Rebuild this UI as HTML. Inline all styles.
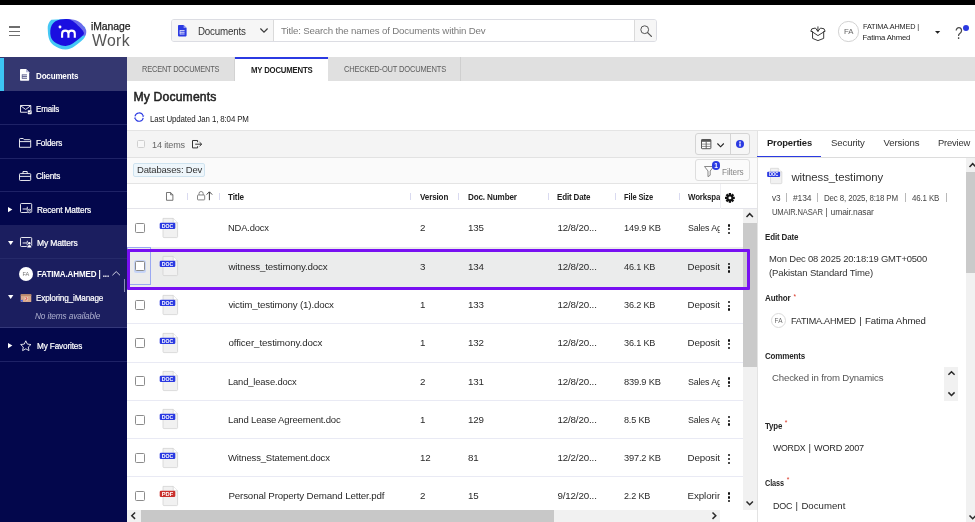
<!DOCTYPE html>
<html lang="en">
<head>
<meta charset="utf-8">
<title>iManage Work - My Documents</title>
<style>
html,body{margin:0;padding:0;}
body{width:975px;height:522px;overflow:hidden;position:relative;background:#fff;font-family:"Liberation Sans", sans-serif;color:#333;}
#app{position:absolute;left:0;top:0;width:975px;height:522px;will-change:transform;}
.a{position:absolute;box-sizing:border-box;}
.t{position:absolute;white-space:pre;line-height:14px;height:14px;color:#333;}
svg{position:absolute;overflow:visible;}
</style>
</head>
<body>
<div id="app">
<div id="topbar" class="a" style="left:0;top:0;width:975px;height:5px;background:#000"></div>
<header id="header" class="a" style="left:0;top:5px;width:975px;height:52px;background:#fff">
</header>
<div class="a" style="left:9px;top:26.45px;width:11.2px;height:1.1px;background:#6e6e6e;"></div>
<div class="a" style="left:9px;top:30.849999999999998px;width:11.2px;height:1.1px;background:#6e6e6e;"></div>
<div class="a" style="left:9px;top:35.050000000000004px;width:11.2px;height:1.1px;background:#6e6e6e;"></div>
<svg class="a" style="left:46px;top:17px;" width="42" height="34" viewBox="0 0 42 34">
<path d="M5.3 2.7 C2.5 5 1.5 8.5 1.7 11.5 C1.9 15 2 18 2.7 20.7 C3.6 24 5 26.3 7.3 27.9 C11 30.6 15 32.4 19.6 32.5 C23 32.5 26 31 28.9 28.9 C33 26 37 23 39.1 19.7 L39.1 10 L20 2 Z" fill="#45c8f5"/>
<path d="M20.7 2 C24 1.8 27 2.4 29.9 3.3 C33 4.4 35.4 6.2 37.1 8.4 C38.8 10.4 40 12 40.2 13.5 C40.4 15.4 40.2 17.2 39.4 18.8 L30 19 L15 15 Z" fill="#6a6cec"/>
<path d="M20.7 2 C16.5 1.9 12.5 2.6 9.4 4.3 C6.4 6.2 4.6 9.6 4.3 13.5 C4.1 15.6 4.3 17.8 4.8 19.7 C5.6 22.6 7.6 24.8 10.4 26.3 C13.2 27.9 16.4 28.9 19.6 28.9 C22.6 28.9 25.4 27.5 27.8 25.8 C31.4 23.4 35 20.6 37.6 17.6 C38.1 16.8 38 15.8 37.6 15 C36.4 12.6 34.2 10.4 31.9 8.4 C29.8 6.4 27.6 4.4 24.8 3.1 C23.5 2.5 22 2.05 20.7 2 Z" fill="#1a0fe0"/>
<circle cx="14" cy="10" r="1.45" fill="#fff"/>
<path d="M16.1 20.7 V16.8 C16.1 12.6 22.45 12.6 22.45 16.8 V20.7 M22.45 16.8 C22.45 12.6 28.8 12.6 28.8 16.8 V20.7" fill="none" stroke="#fff" stroke-width="2.1"/>
</svg>
<span class="t" style="left:91px;top:19.60px;font-size:10.4px;color:#222;letter-spacing:-0.066px;-webkit-text-stroke:0.25px #222;">iManage</span>
<span class="t" style="left:92px;top:33.90px;font-size:15.8px;color:#555;letter-spacing:0.355px;">Work</span>
<div id="search" class="a" style="left:171px;top:19.2px;width:486px;height:22.5px;border:1px solid #dcdde3;border-radius:3px;background:#fff;overflow:hidden"><div class="a" style="left:0;top:0;width:101.5px;height:21px;background:#f6f6f6;border-right:1px solid #dadada"></div><div class="a" style="left:461.6px;top:0;width:24px;height:21px;background:#f6f6f6;border-left:1px solid #dadada"></div></div>
<svg class="a" style="left:178px;top:25.4px;" width="8.6" height="11.4" viewBox="0 0 8.6 11.4">
<path d="M0.8 0 H5.6 L8.6 3 V10.6 Q8.6 11.4 7.8 11.4 H0.8 Q0 11.4 0 10.6 V0.8 Q0 0 0.8 0 Z" fill="#2b3ae2"/>
<path d="M5.6 0 V3 H8.6 Z" fill="#8c96f0"/>
<path d="M2 5.6 H6.6 M2 7.3 H6.6 M2 9 H6.6" stroke="#fff" stroke-width="0.8"/>
<path d="M2 5.2 V9.4" stroke="#fff" stroke-width="0.6"/>
</svg>
<span class="t" style="left:197.6px;top:24.70px;font-size:10px;letter-spacing:-0.197px;transform:scaleX(0.9753);transform-origin:0 50%;">Documents</span>
<svg class="a" style="left:260.4px;top:28.4px;" width="8" height="5" viewBox="0 0 8 5"><path d="M0.4 0.5 L4 4.2 L7.6 0.5" fill="none" stroke="#3a3a3a" stroke-width="1.15"/></svg>
<span class="t" style="left:281.2px;top:24.10px;font-size:9.8px;color:#7a7a7a;letter-spacing:-0.160px;transform:scaleX(0.9894);transform-origin:0 50%;">Title: Search the names of Documents within Dev</span>
<svg class="a" style="left:640px;top:24.5px;" width="12" height="12" viewBox="0 0 12 12"><circle cx="4.7" cy="4.7" r="3.9" fill="none" stroke="#555" stroke-width="1"/><path d="M7.6 7.6 L11.4 11.4" stroke="#555" stroke-width="1.3" stroke-linecap="round"/></svg>
<svg class="a" style="left:810px;top:26px;" width="16" height="15.5" viewBox="0 0 16 15.5">
<g fill="none" stroke="#3a3a3a" stroke-width="1" stroke-linejoin="round" stroke-linecap="round">
<path d="M2.56 6 V12.4 L7.95 14.6 L13.7 12.4 V6"/>
<path d="M2.56 6 L7.95 9.6 L13.7 6"/>
<path d="M2.56 5.8 L0.8 5.3 L1.85 2.8 L5.4 2.05 L7.95 5.3 L10.5 2.05 L14.05 2.8 L15.1 5.3 L13.7 5.8"/>
<path d="M7.95 0.8 V5 M6.9 3.9 L7.95 5.2 L9 3.9"/>
</g></svg>
<div class="a" style="left:838.4px;top:21.4px;width:20.2px;height:20.2px;border:1px solid #d2d2d2;border-radius:50%;background:#fff"></div>
<span class="t" style="left:844px;top:24.80px;font-size:7.9px;color:#666;letter-spacing:-0.169px;transform:scaleX(0.9873);transform-origin:0 50%;">FA</span>
<span class="t" style="left:862.6px;top:20.00px;font-size:7.7px;color:#222;letter-spacing:-0.153px;transform:scaleX(0.9477);transform-origin:0 50%;">FATIMA.AHMED |</span>
<span class="t" style="left:862.6px;top:30.50px;font-size:7.7px;color:#222;letter-spacing:-0.165px;">Fatima Ahmed</span>
<svg class="a" style="left:935.4px;top:31px;" width="5.2" height="2.8" viewBox="0 0 5.2 2.8"><path d="M0 0 H5.2 L2.6 2.8 Z" fill="#222"/></svg>
<span class="t" style="left:955px;top:26.20px;font-size:16.5px;color:#4c4c4c;letter-spacing:-0.322px;transform:scaleX(0.8347);transform-origin:0 50%;">?</span>
<div class="a" style="left:963.4px;top:24.6px;width:6px;height:6px;border-radius:50%;background:#2b3ae2"></div>
<nav id="sidebar" class="a" style="left:0;top:57px;width:126.6px;height:465px;background:#03074c">
</nav>
<div class="a" style="left:0px;top:57px;width:126.6px;height:34px;background:#343770;"></div>
<div class="a" style="left:0px;top:58px;width:3.7px;height:32.7px;background:#3cc4f4;"></div>
<div class="a" style="left:0px;top:225px;width:126.6px;height:102.6px;background:#1b1e5f;"></div>
<div class="a" style="left:0px;top:124.2px;width:126.6px;height:0.8px;background:#1e2266;"></div>
<div class="a" style="left:0px;top:158px;width:126.6px;height:0.8px;background:#1e2266;"></div>
<div class="a" style="left:0px;top:191.2px;width:126.6px;height:0.8px;background:#1e2266;"></div>
<div class="a" style="left:0px;top:258.2px;width:126.6px;height:0.8px;background:#262a6a;"></div>
<div class="a" style="left:0px;top:327.4px;width:126.6px;height:0.8px;background:#34387a;"></div>
<div class="a" style="left:0px;top:361.2px;width:126.6px;height:0.8px;background:#1e2266;"></div>
<div class="a" style="left:124.2px;top:279.4px;width:1.1px;height:12.8px;background:#8c8eb8;"></div>
<svg class="a" style="left:19.7px;top:69.2px;" width="9.2" height="11.8" viewBox="0 0 9.2 11.6">
<path d="M0.8 0 H6 L9.2 3.2 V10.8 Q9.2 11.6 8.4 11.6 H0.8 Q0 11.6 0 10.8 V0.8 Q0 0 0.8 0 Z" fill="#fff"/>
<path d="M6 0 V3.2 H9.2 Z" fill="#b9badb"/>
<path d="M2.2 5.8 H7 M2.2 7.5 H7 M2.2 9.2 H7" stroke="#33366f" stroke-width="0.8"/>
<path d="M2.2 5.4 V9.6" stroke="#33366f" stroke-width="0.6"/>
</svg>
<span class="t" style="left:35.6px;top:68.50px;font-size:8.7px;font-weight:700;color:#fff;letter-spacing:-0.184px;transform:scaleX(0.9243);transform-origin:0 50%;">Documents</span>
<svg class="a" style="left:19.6px;top:104.6px;" width="12" height="9.4" viewBox="0 0 12.2 9.6">
<g fill="none" stroke="#fff" stroke-width="0.9" stroke-linejoin="round">
<path d="M7.4 7.4 H0.5 V0.5 H11 V5"/>
<path d="M0.6 0.7 L5.75 4.6 L10.9 0.7"/>
</g>
<rect x="7.9" y="5.4" width="4" height="4" rx="0.6" fill="#fff"/>
<path d="M8.8 7.5 L9.6 8.3 L11 6.5" fill="none" stroke="#03074c" stroke-width="0.7"/>
</svg>
<span class="t" style="left:36px;top:102.00px;font-size:8.7px;color:#fff;letter-spacing:-0.152px;transform:scaleX(0.9219);transform-origin:0 50%;-webkit-text-stroke:0.22px #fff;">Emails</span>
<svg class="a" style="left:19.2px;top:138px;" width="12.2" height="9.8" viewBox="0 0 12.2 9.8">
<g fill="none" stroke="#fff" stroke-width="0.9" stroke-linejoin="round">
<path d="M0.5 9.3 V1.4 Q0.5 0.5 1.4 0.5 H4.2 L5.2 1.7 H10.8 Q11.7 1.7 11.7 2.6 V9.3 Z"/>
<path d="M0.5 3.6 H11.7"/>
</g></svg>
<span class="t" style="left:36px;top:135.60px;font-size:8.7px;color:#fff;letter-spacing:-0.145px;transform:scaleX(0.9372);transform-origin:0 50%;-webkit-text-stroke:0.22px #fff;">Folders</span>
<svg class="a" style="left:19.2px;top:170.8px;" width="12.2" height="10" viewBox="0 0 12.2 10">
<g fill="none" stroke="#fff" stroke-width="0.9" stroke-linejoin="round">
<rect x="0.5" y="2.6" width="11.2" height="6.9" rx="0.8"/>
<path d="M4 2.6 V0.5 H8.2 V2.6"/>
<path d="M0.5 5.4 H11.7"/>
</g></svg>
<span class="t" style="left:36px;top:169.00px;font-size:8.7px;color:#fff;letter-spacing:-0.133px;transform:scaleX(0.9441);transform-origin:0 50%;-webkit-text-stroke:0.22px #fff;">Clients</span>
<svg class="a" style="left:7.8px;top:207px;" width="4.4" height="5.2" viewBox="0 0 4.4 5.2"><path d="M0 0 L4.4 2.6 L0 5.2 Z" fill="#fff"/></svg>
<svg class="a" style="left:19.6px;top:203px;" width="12.6" height="10.6" viewBox="0 0 12.6 10.6">
<g fill="none" stroke="#fff" stroke-width="0.9" stroke-linejoin="round">
<rect x="0.5" y="0.5" width="11.2" height="9" rx="0.9"/>
<path d="M2.6 6 H7 M7.3 3.8 V8.6"/>
</g>
<circle cx="9.5" cy="8" r="2.3" fill="#03074c"/>
<circle cx="9.5" cy="8" r="1.75" fill="none" stroke="#fff" stroke-width="0.8"/>
<path d="M9.5 7 V8.1 L10.3 8.5" fill="none" stroke="#fff" stroke-width="0.6"/>
</svg>
<span class="t" style="left:36.6px;top:202.60px;font-size:8.7px;color:#fff;letter-spacing:-0.147px;transform:scaleX(0.9500);transform-origin:0 50%;-webkit-text-stroke:0.22px #fff;">Recent Matters</span>
<svg class="a" style="left:7.6px;top:240.6px;" width="5.4" height="4" viewBox="0 0 5.4 4"><path d="M0 0 H5.4 L2.7 4 Z" fill="#fff"/></svg>
<svg class="a" style="left:19.6px;top:236.6px;" width="12.6" height="10.8" viewBox="0 0 12.6 10.8">
<g fill="none" stroke="#fff" stroke-width="0.9" stroke-linejoin="round">
<rect x="0.5" y="0.5" width="11.2" height="9" rx="0.9"/>
<path d="M2.6 6 H7 M7.3 3.8 V8.6"/>
</g>
<circle cx="9.3" cy="6.3" r="1.8" fill="#1b1e5f"/>
<path d="M6.6 10.8 Q6.6 7.6 9.3 7.6 Q12 7.6 12 10.8 Z" fill="#1b1e5f"/>
<circle cx="9.3" cy="6.3" r="1.25" fill="#fff"/>
<path d="M7.2 10.6 Q7.2 8.1 9.3 8.1 Q11.4 8.1 11.4 10.6 Z" fill="#fff"/>
</svg>
<span class="t" style="left:36.6px;top:236.20px;font-size:8.7px;color:#fff;letter-spacing:-0.150px;transform:scaleX(0.9791);transform-origin:0 50%;-webkit-text-stroke:0.22px #fff;">My Matters</span>
<div class="a" style="left:18.6px;top:266.8px;width:14.4px;height:14.4px;border-radius:50%;background:#fff"></div>
<span class="t" style="left:22.4px;top:267.10px;font-size:5.6px;color:#777;letter-spacing:-0.022px;">FA</span>
<span class="t" style="left:37.4px;top:267.20px;font-size:8.7px;font-weight:700;color:#fff;letter-spacing:-0.156px;transform:scaleX(0.9274);transform-origin:0 50%;">FATIMA.AHMED | ...</span>
<svg class="a" style="left:112.4px;top:271px;" width="8.4" height="4.6" viewBox="0 0 8.4 4.6"><path d="M0.4 4.3 L4.2 0.6 L8 4.3" fill="none" stroke="#e6e6f2" stroke-width="0.9"/></svg>
<svg class="a" style="left:7.6px;top:295.2px;" width="5.4" height="4" viewBox="0 0 5.4 4"><path d="M0 0 H5.4 L2.7 4 Z" fill="#fff"/></svg>
<svg class="a" style="left:20px;top:293.9px;" width="11.6" height="8.6" viewBox="0 0 11.6 8.8">
<rect x="0.6" y="0.3" width="10.8" height="8" rx="0.6" fill="#d9a98c"/>
<rect x="0.6" y="0.3" width="10.8" height="1.6" fill="#b98667"/>
<rect x="4.6" y="3" width="3.2" height="3.6" fill="#e9d3c2"/>
<path d="M5.8 3.2 L6.8 4.4 L5.6 6.4" stroke="#d22" stroke-width="0.9" fill="none"/>
<path d="M0 7 L2.6 5.6 V8.4 Z" fill="#2f55e8"/>
</svg>
<span class="t" style="left:35.6px;top:291.40px;font-size:8.7px;color:#fff;letter-spacing:-0.153px;transform:scaleX(0.9363);transform-origin:0 50%;-webkit-text-stroke:0.22px #fff;">Exploring_iManage</span>
<span class="t" style="left:35.4px;top:309.00px;font-size:8.7px;color:#aeb0cf;font-style:italic;letter-spacing:-0.138px;transform:scaleX(0.9518);transform-origin:0 50%;">No items available</span>
<svg class="a" style="left:7.8px;top:343px;" width="4.4" height="5.2" viewBox="0 0 4.4 5.2"><path d="M0 0 L4.4 2.6 L0 5.2 Z" fill="#fff"/></svg>
<svg class="a" style="left:20px;top:339.8px;" width="11.6" height="11.2" viewBox="0 0 11.6 11.2"><path d="M5.8 0.8 L7.35 4.1 L10.95 4.55 L8.3 7.05 L9 10.6 L5.8 8.85 L2.6 10.6 L3.3 7.05 L0.65 4.55 L4.25 4.1 Z" fill="none" stroke="#fff" stroke-width="0.85" stroke-linejoin="round"/></svg>
<span class="t" style="left:36.6px;top:339.00px;font-size:8.7px;color:#fff;letter-spacing:-0.145px;transform:scaleX(0.9418);transform-origin:0 50%;-webkit-text-stroke:0.22px #fff;">My Favorites</span>
<div id="tabs" class="a" style="left:127px;top:57px;width:848px;height:24px;background:#e0e0e0"></div>
<div class="a" style="left:235px;top:57px;width:93px;height:24px;background:#fff;border-top:2px solid #2b3ae2;"></div>
<div class="a" style="left:459.6px;top:57px;width:0.8px;height:24px;background:#cfcfcf;"></div>
<div class="a" style="left:234.4px;top:57px;width:0.8px;height:24px;background:#d2d2d2;"></div>
<span class="t" style="left:142px;top:63.30px;font-size:8.2px;color:#5c5c5c;letter-spacing:-0.194px;transform:scaleX(0.9057);transform-origin:0 50%;">RECENT DOCUMENTS</span>
<span class="t" style="left:251px;top:63.20px;font-size:8.3px;font-weight:700;color:#222;letter-spacing:-0.199px;transform:scaleX(0.9377);transform-origin:0 50%;">MY DOCUMENTS</span>
<span class="t" style="left:343.6px;top:63.30px;font-size:8.2px;color:#5c5c5c;letter-spacing:-0.192px;transform:scaleX(0.9196);transform-origin:0 50%;">CHECKED-OUT DOCUMENTS</span>
<span class="t" style="left:133.4px;top:90.10px;font-size:12.2px;color:#222;letter-spacing:0.160px;-webkit-text-stroke:0.5px #222;">My Documents</span>
<svg class="a" style="left:134.2px;top:112.2px;" width="10.2" height="10.2" viewBox="0 0 10.2 10.2">
<g fill="none" stroke="#2b3ae2" stroke-width="1.05">
<path d="M0.96 4.37 A4.2 4.2 0 0 1 9.05 3.66"/>
<path d="M9.24 5.83 A4.2 4.2 0 0 1 1.15 6.54"/>
</g>
<path d="M9.5 5 L10.3 3.2 L7.8 4.1 Z" fill="#2b3ae2"/>
<path d="M0.7 5.2 L-0.1 7 L2.4 6.1 Z" fill="#2b3ae2"/>
</svg>
<span class="t" style="left:149.8px;top:112.70px;font-size:8.2px;color:#222;letter-spacing:-0.137px;transform:scaleX(0.9653);transform-origin:0 50%;">Last Updated Jan 1, 8:04 PM</span>
<div id="toolbar" class="a" style="left:127px;top:130px;width:630px;height:28px;background:#f4f4f4;border-top:1px solid #e4e4e4;border-bottom:1px solid #e2e2e2"></div>
<div class="a" style="left:136.6px;top:139.8px;width:8.6px;height:8.6px;border:1px solid #cfcfcf;border-radius:1.5px;background:#f8f8f8"></div>
<span class="t" style="left:152.4px;top:137.80px;font-size:9.4px;color:#666;letter-spacing:-0.155px;transform:scaleX(0.9650);transform-origin:0 50%;">14 items</span>
<svg class="a" style="left:192px;top:140.4px;" width="10.4" height="8.4" viewBox="0 0 10.4 8.4">
<g fill="none" stroke="#333" stroke-width="1" stroke-linejoin="round">
<path d="M5.6 2.2 V0.5 H0.5 V7.9 H5.6 V6.2"/>
<path d="M3.2 4.2 H9.6 M7.6 2.2 L9.7 4.2 L7.6 6.2"/>
</g></svg>
<div class="a" style="left:695.2px;top:133.2px;width:54.4px;height:21.4px;border:1px solid #d4d4d4;border-radius:3px;background:#f6f6f6"></div>
<div class="a" style="left:730px;top:133.6px;width:0.9px;height:20.6px;background:#d4d4d4;"></div>
<svg class="a" style="left:701.4px;top:138.7px;" width="10.4" height="10.2" viewBox="0 0 10.4 10.2">
<rect x="0.5" y="0.5" width="9.4" height="9.2" rx="0.6" fill="#fff" stroke="#555" stroke-width="1"/>
<rect x="0.5" y="0.5" width="9.4" height="2.3" fill="#555"/>
<path d="M0.5 5.1 H9.9 M0.5 7.4 H9.9" stroke="#777" stroke-width="0.8"/>
<path d="M5.2 2.6 V9.7" stroke="#555" stroke-width="0.9"/>
</svg>
<svg class="a" style="left:717px;top:143px;" width="7.2" height="4.4" viewBox="0 0 7.2 4.4"><path d="M0.4 0.5 L3.6 3.8 L6.8 0.5" fill="none" stroke="#222" stroke-width="1.1"/></svg>
<div class="a" style="left:735.6px;top:140px;width:8px;height:8px;border-radius:50%;background:#2b3ae2"></div>
<svg class="a" style="left:735.6px;top:140px;" width="8" height="8" viewBox="0 0 8 8"><circle cx="4" cy="2.15" r="0.8" fill="#fff"/><rect x="3.35" y="3.4" width="1.3" height="3.1" fill="#fff"/></svg>
<div id="filters" class="a" style="left:127px;top:158px;width:630px;height:25.5px;background:#fafafa;border-bottom:1px solid #e4e4e4"></div>
<div class="a" style="left:133px;top:163px;width:72.2px;height:14.2px;border:1px solid #cfe3ef;border-radius:2px;background:#eef6fb"></div>
<span class="t" style="left:136.6px;top:163.30px;font-size:9.8px;letter-spacing:-0.174px;transform:scaleX(0.9693);transform-origin:0 50%;">Databases: Dev</span>
<div class="a" style="left:695.2px;top:159.4px;width:54.4px;height:21.4px;border:1px solid #dedede;border-radius:3px;background:#fbfbfb"></div>
<svg class="a" style="left:704px;top:166px;" width="10.2" height="11.2" viewBox="0 0 10.2 11.2"><path d="M0.5 0.5 H9.7 L6.2 5 V9.2 L4 10.7 V5 Z" fill="none" stroke="#7a7a7a" stroke-width="0.9" stroke-linejoin="round"/></svg>
<div class="a" style="left:711.6px;top:161.2px;width:8.8px;height:8.8px;border-radius:50%;background:#2b3ae2"></div>
<span class="t" style="left:714.3px;top:158.70px;font-size:6.6px;font-weight:700;color:#fff;">1</span>
<span class="t" style="left:721.8px;top:165.20px;font-size:8.6px;color:#858585;letter-spacing:-0.117px;transform:scaleX(0.9563);transform-origin:0 50%;">Filters</span>
<div id="gridhead" class="a" style="left:127px;top:183.5px;width:630px;height:25.2px;background:#fff;border-bottom:1px solid #e4e4ea"></div>
<svg class="a" style="left:166px;top:192px;" width="7.4" height="8.8" viewBox="0 0 7.4 8.8"><path d="M0.5 0.5 H4.6 L6.9 2.8 V8.3 H0.5 Z M4.6 0.5 V2.8 H6.9" fill="none" stroke="#5e5e5e" stroke-width="0.85" stroke-linejoin="round"/></svg>
<svg class="a" style="left:197px;top:191.4px;" width="16" height="9.4" viewBox="0 0 16 9.4">
<g fill="none" stroke="#787878" stroke-width="0.9" stroke-linejoin="round">
<rect x="0.5" y="4" width="7.2" height="4.9" rx="0.6"/>
<path d="M2 4 V2.6 Q2 0.5 4.1 0.5 Q6.2 0.5 6.2 2.6 V4"/>
</g>
<path d="M12.4 9.2 V1 M9.6 3.6 L12.4 0.8 L15.2 3.6" fill="none" stroke="#333" stroke-width="0.95"/>
</svg>
<div class="a" style="left:187.2px;top:193px;width:0.9px;height:6.6px;background:#d9daf0;"></div>
<div class="a" style="left:219.2px;top:193px;width:0.9px;height:6.6px;background:#d9daf0;"></div>
<div class="a" style="left:410.4px;top:193px;width:0.9px;height:6.6px;background:#d9daf0;"></div>
<div class="a" style="left:458.4px;top:193px;width:0.9px;height:6.6px;background:#d9daf0;"></div>
<div class="a" style="left:548.2px;top:193px;width:0.9px;height:6.6px;background:#d9daf0;"></div>
<div class="a" style="left:614.8px;top:193px;width:0.9px;height:6.6px;background:#d9daf0;"></div>
<div class="a" style="left:679px;top:193px;width:0.9px;height:6.6px;background:#d9daf0;"></div>
<span class="t" style="left:228.4px;top:189.85px;font-size:8.4px;font-weight:700;color:#1e1e1e;letter-spacing:-0.120px;transform:scaleX(0.9709);transform-origin:0 50%;">Title</span>
<span class="t" style="left:419.6px;top:189.85px;font-size:8.4px;font-weight:700;color:#1e1e1e;letter-spacing:-0.151px;transform:scaleX(0.9655);transform-origin:0 50%;">Version</span>
<span class="t" style="left:468px;top:189.85px;font-size:8.4px;font-weight:700;color:#1e1e1e;letter-spacing:-0.166px;transform:scaleX(0.9702);transform-origin:0 50%;">Doc. Number</span>
<span class="t" style="left:557.4px;top:189.85px;font-size:8.4px;font-weight:700;color:#1e1e1e;letter-spacing:-0.141px;transform:scaleX(0.9532);transform-origin:0 50%;">Edit Date</span>
<span class="t" style="left:624.4px;top:189.85px;font-size:8.4px;font-weight:700;color:#1e1e1e;letter-spacing:-0.130px;transform:scaleX(0.8967);transform-origin:0 50%;">File Size</span>
<div class="a" style="left:687.7px;top:189px;width:32.6px;height:15px;overflow:hidden">
<span class="t" style="left:0px;top:0.85px;font-size:8.4px;font-weight:700;color:#1e1e1e;letter-spacing:-0.173px;transform:scaleX(0.9445);transform-origin:0 50%;">Workspace</span>
</div>
<div class="a" style="left:720.4px;top:183.5px;width:0.9px;height:25.2px;background:#f0f0f4;"></div>
<svg class="a" style="left:725px;top:192.6px;" width="9.8" height="9.8" viewBox="0 0 9.8 9.8"><g transform="translate(4.9 4.9)"><g fill="#111"><rect x="-1.15" y="-4.9" width="2.3" height="3" transform="rotate(0)"/><rect x="-1.15" y="-4.9" width="2.3" height="3" transform="rotate(45)"/><rect x="-1.15" y="-4.9" width="2.3" height="3" transform="rotate(90)"/><rect x="-1.15" y="-4.9" width="2.3" height="3" transform="rotate(135)"/><rect x="-1.15" y="-4.9" width="2.3" height="3" transform="rotate(180)"/><rect x="-1.15" y="-4.9" width="2.3" height="3" transform="rotate(225)"/><rect x="-1.15" y="-4.9" width="2.3" height="3" transform="rotate(270)"/><rect x="-1.15" y="-4.9" width="2.3" height="3" transform="rotate(315)"/><circle r="3.5"/></g><circle r="1.45" fill="#fff"/></g></svg>
<div id="gridbody" class="a" style="left:127px;top:209px;width:630px;height:301px;overflow:hidden;background:#fff">
</div>
<div class="a" style="left:127px;top:247.3px;width:617px;height:39.8px;background:#ebecec;"></div>
<div class="a" style="left:135px;top:223.00px;width:10px;height:10px;border:1.1px solid #8c8c8c;border-radius:1.4px;background:#fff"></div>
<svg class="a" style="left:159.2px;top:217.9px;" width="19" height="20" viewBox="0 0 19 20">
<path d="M4 0.4 H14.2 L18.6 4.8 V18.6 Q18.6 19.6 17.6 19.6 H5 Q4 19.6 4 18.6 Z" fill="#f1f1f1" stroke="#cfcfcf" stroke-width="0.7"/>
<path d="M14.2 0.4 V4.8 H18.6" fill="#fff" stroke="#cfcfcf" stroke-width="0.7"/>
<rect x="0.7" y="4.7" width="15.6" height="6.4" rx="1.3" fill="#2b3ae2"/>
<text x="8.5" y="10" font-family="Liberation Sans, sans-serif" font-size="5.6" font-weight="700" fill="#fff" text-anchor="middle" textLength="11.4" lengthAdjust="spacingAndGlyphs">DOC</text>
</svg>
<span class="t" style="left:228.4px;top:221.35px;font-size:9.75px;color:#2a2a2a;letter-spacing:-0.192px;transform:scaleX(0.9633);transform-origin:0 50%;">NDA.docx</span>
<span class="t" style="left:420px;top:221.35px;font-size:9.75px;color:#2a2a2a;letter-spacing:-0.15px;">2</span>
<span class="t" style="left:468px;top:221.35px;font-size:9.75px;color:#2a2a2a;letter-spacing:-0.15px;">135</span>
<span class="t" style="left:557.4px;top:221.35px;font-size:9.75px;color:#2a2a2a;letter-spacing:-0.127px;">12/8/20...</span>
<span class="t" style="left:624.4px;top:221.35px;font-size:9.75px;color:#2a2a2a;letter-spacing:-0.176px;transform:scaleX(0.9504);transform-origin:0 50%;">149.9 KB</span>
<div class="a" style="left:687.5px;top:221.35px;width:32.8px;height:15px;overflow:hidden">
<span class="t" style="left:0px;top:0.00px;font-size:9.75px;color:#2a2a2a;letter-spacing:-0.173px;transform:scaleX(0.9070);transform-origin:0 50%;">Sales Agreement</span>
</div>
<div class="a" style="left:728.05px;top:224.25px;width:2.4px;height:2.4px;border-radius:50%;background:#111"></div>
<div class="a" style="left:728.05px;top:228.05px;width:2.4px;height:2.4px;border-radius:50%;background:#111"></div>
<div class="a" style="left:728.05px;top:231.85px;width:2.4px;height:2.4px;border-radius:50%;background:#111"></div>
<div class="a" style="left:127.4px;top:247.4px;width:23.7px;height:37.6px;border:1.3px solid #9aa8f2"></div>
<div class="a" style="left:133.8px;top:260.4px;width:12.4px;height:12.2px;border-radius:2.5px;background:#c5d4f8"></div>
<div class="a" style="left:135px;top:261.30px;width:10px;height:10px;border:1.1px solid #8c8c8c;border-radius:1.4px;background:#fff"></div>
<svg class="a" style="left:159.2px;top:256.2px;" width="19" height="20" viewBox="0 0 19 20">
<path d="M4 0.4 H14.2 L18.6 4.8 V18.6 Q18.6 19.6 17.6 19.6 H5 Q4 19.6 4 18.6 Z" fill="#f1f1f1" stroke="#cfcfcf" stroke-width="0.7"/>
<path d="M14.2 0.4 V4.8 H18.6" fill="#fff" stroke="#cfcfcf" stroke-width="0.7"/>
<rect x="0.7" y="4.7" width="15.6" height="6.4" rx="1.3" fill="#2b3ae2"/>
<text x="8.5" y="10" font-family="Liberation Sans, sans-serif" font-size="5.6" font-weight="700" fill="#fff" text-anchor="middle" textLength="11.4" lengthAdjust="spacingAndGlyphs">DOC</text>
</svg>
<span class="t" style="left:228.4px;top:259.65px;font-size:9.75px;color:#2a2a2a;letter-spacing:-0.139px;">witness_testimony.docx</span>
<span class="t" style="left:420px;top:259.65px;font-size:9.75px;color:#2a2a2a;letter-spacing:-0.15px;">3</span>
<span class="t" style="left:468px;top:259.65px;font-size:9.75px;color:#2a2a2a;letter-spacing:-0.15px;">134</span>
<span class="t" style="left:557.4px;top:259.65px;font-size:9.75px;color:#2a2a2a;letter-spacing:-0.127px;">12/8/20...</span>
<span class="t" style="left:624.4px;top:259.65px;font-size:9.75px;color:#2a2a2a;letter-spacing:-0.174px;transform:scaleX(0.9317);transform-origin:0 50%;">46.1 KB</span>
<div class="a" style="left:687.5px;top:259.65px;width:32.8px;height:15px;overflow:hidden">
<span class="t" style="left:0px;top:0.00px;font-size:9.75px;color:#2a2a2a;letter-spacing:-0.109px;">Deposition</span>
</div>
<div class="a" style="left:728.05px;top:262.55px;width:2.4px;height:2.4px;border-radius:50%;background:#111"></div>
<div class="a" style="left:728.05px;top:266.35px;width:2.4px;height:2.4px;border-radius:50%;background:#111"></div>
<div class="a" style="left:728.05px;top:270.15px;width:2.4px;height:2.4px;border-radius:50%;background:#111"></div>
<div class="a" style="left:135px;top:299.60px;width:10px;height:10px;border:1.1px solid #8c8c8c;border-radius:1.4px;background:#fff"></div>
<svg class="a" style="left:159.2px;top:294.5px;" width="19" height="20" viewBox="0 0 19 20">
<path d="M4 0.4 H14.2 L18.6 4.8 V18.6 Q18.6 19.6 17.6 19.6 H5 Q4 19.6 4 18.6 Z" fill="#f1f1f1" stroke="#cfcfcf" stroke-width="0.7"/>
<path d="M14.2 0.4 V4.8 H18.6" fill="#fff" stroke="#cfcfcf" stroke-width="0.7"/>
<rect x="0.7" y="4.7" width="15.6" height="6.4" rx="1.3" fill="#2b3ae2"/>
<text x="8.5" y="10" font-family="Liberation Sans, sans-serif" font-size="5.6" font-weight="700" fill="#fff" text-anchor="middle" textLength="11.4" lengthAdjust="spacingAndGlyphs">DOC</text>
</svg>
<span class="t" style="left:228.4px;top:297.95px;font-size:9.75px;color:#2a2a2a;letter-spacing:-0.184px;">victim_testimony (1).docx</span>
<span class="t" style="left:420px;top:297.95px;font-size:9.75px;color:#2a2a2a;letter-spacing:-0.15px;">1</span>
<span class="t" style="left:468px;top:297.95px;font-size:9.75px;color:#2a2a2a;letter-spacing:-0.15px;">133</span>
<span class="t" style="left:557.4px;top:297.95px;font-size:9.75px;color:#2a2a2a;letter-spacing:-0.127px;">12/8/20...</span>
<span class="t" style="left:624.4px;top:297.95px;font-size:9.75px;color:#2a2a2a;letter-spacing:-0.174px;transform:scaleX(0.9317);transform-origin:0 50%;">36.2 KB</span>
<div class="a" style="left:687.5px;top:297.95px;width:32.8px;height:15px;overflow:hidden">
<span class="t" style="left:0px;top:0.00px;font-size:9.75px;color:#2a2a2a;letter-spacing:-0.109px;">Deposition</span>
</div>
<div class="a" style="left:728.05px;top:300.85px;width:2.4px;height:2.4px;border-radius:50%;background:#111"></div>
<div class="a" style="left:728.05px;top:304.65px;width:2.4px;height:2.4px;border-radius:50%;background:#111"></div>
<div class="a" style="left:728.05px;top:308.45px;width:2.4px;height:2.4px;border-radius:50%;background:#111"></div>
<div class="a" style="left:127px;top:323.2px;width:617px;height:0.9px;background:#e9eaf4;"></div>
<div class="a" style="left:135px;top:337.90px;width:10px;height:10px;border:1.1px solid #8c8c8c;border-radius:1.4px;background:#fff"></div>
<svg class="a" style="left:159.2px;top:332.8px;" width="19" height="20" viewBox="0 0 19 20">
<path d="M4 0.4 H14.2 L18.6 4.8 V18.6 Q18.6 19.6 17.6 19.6 H5 Q4 19.6 4 18.6 Z" fill="#f1f1f1" stroke="#cfcfcf" stroke-width="0.7"/>
<path d="M14.2 0.4 V4.8 H18.6" fill="#fff" stroke="#cfcfcf" stroke-width="0.7"/>
<rect x="0.7" y="4.7" width="15.6" height="6.4" rx="1.3" fill="#2b3ae2"/>
<text x="8.5" y="10" font-family="Liberation Sans, sans-serif" font-size="5.6" font-weight="700" fill="#fff" text-anchor="middle" textLength="11.4" lengthAdjust="spacingAndGlyphs">DOC</text>
</svg>
<span class="t" style="left:228.4px;top:336.25px;font-size:9.75px;color:#2a2a2a;letter-spacing:-0.096px;">officer_testimony.docx</span>
<span class="t" style="left:420px;top:336.25px;font-size:9.75px;color:#2a2a2a;letter-spacing:-0.15px;">1</span>
<span class="t" style="left:468px;top:336.25px;font-size:9.75px;color:#2a2a2a;letter-spacing:-0.15px;">132</span>
<span class="t" style="left:557.4px;top:336.25px;font-size:9.75px;color:#2a2a2a;letter-spacing:-0.127px;">12/8/20...</span>
<span class="t" style="left:624.4px;top:336.25px;font-size:9.75px;color:#2a2a2a;letter-spacing:-0.174px;transform:scaleX(0.9317);transform-origin:0 50%;">36.1 KB</span>
<div class="a" style="left:687.5px;top:336.25px;width:32.8px;height:15px;overflow:hidden">
<span class="t" style="left:0px;top:0.00px;font-size:9.75px;color:#2a2a2a;letter-spacing:-0.109px;">Deposition</span>
</div>
<div class="a" style="left:728.05px;top:339.15px;width:2.4px;height:2.4px;border-radius:50%;background:#111"></div>
<div class="a" style="left:728.05px;top:342.95px;width:2.4px;height:2.4px;border-radius:50%;background:#111"></div>
<div class="a" style="left:728.05px;top:346.75px;width:2.4px;height:2.4px;border-radius:50%;background:#111"></div>
<div class="a" style="left:127px;top:361.5px;width:617px;height:0.9px;background:#e9eaf4;"></div>
<div class="a" style="left:135px;top:376.20px;width:10px;height:10px;border:1.1px solid #8c8c8c;border-radius:1.4px;background:#fff"></div>
<svg class="a" style="left:159.2px;top:371.09999999999997px;" width="19" height="20" viewBox="0 0 19 20">
<path d="M4 0.4 H14.2 L18.6 4.8 V18.6 Q18.6 19.6 17.6 19.6 H5 Q4 19.6 4 18.6 Z" fill="#f1f1f1" stroke="#cfcfcf" stroke-width="0.7"/>
<path d="M14.2 0.4 V4.8 H18.6" fill="#fff" stroke="#cfcfcf" stroke-width="0.7"/>
<rect x="0.7" y="4.7" width="15.6" height="6.4" rx="1.3" fill="#2b3ae2"/>
<text x="8.5" y="10" font-family="Liberation Sans, sans-serif" font-size="5.6" font-weight="700" fill="#fff" text-anchor="middle" textLength="11.4" lengthAdjust="spacingAndGlyphs">DOC</text>
</svg>
<span class="t" style="left:228.4px;top:374.55px;font-size:9.75px;color:#2a2a2a;letter-spacing:-0.172px;transform:scaleX(0.9641);transform-origin:0 50%;">Land_lease.docx</span>
<span class="t" style="left:420px;top:374.55px;font-size:9.75px;color:#2a2a2a;letter-spacing:-0.15px;">2</span>
<span class="t" style="left:468px;top:374.55px;font-size:9.75px;color:#2a2a2a;letter-spacing:-0.15px;">131</span>
<span class="t" style="left:557.4px;top:374.55px;font-size:9.75px;color:#2a2a2a;letter-spacing:-0.127px;">12/8/20...</span>
<span class="t" style="left:624.4px;top:374.55px;font-size:9.75px;color:#2a2a2a;letter-spacing:-0.176px;transform:scaleX(0.9504);transform-origin:0 50%;">839.9 KB</span>
<div class="a" style="left:687.5px;top:374.55px;width:32.8px;height:15px;overflow:hidden">
<span class="t" style="left:0px;top:0.00px;font-size:9.75px;color:#2a2a2a;letter-spacing:-0.173px;transform:scaleX(0.9070);transform-origin:0 50%;">Sales Agreement</span>
</div>
<div class="a" style="left:728.05px;top:377.45px;width:2.4px;height:2.4px;border-radius:50%;background:#111"></div>
<div class="a" style="left:728.05px;top:381.25px;width:2.4px;height:2.4px;border-radius:50%;background:#111"></div>
<div class="a" style="left:728.05px;top:385.05px;width:2.4px;height:2.4px;border-radius:50%;background:#111"></div>
<div class="a" style="left:127px;top:399.8px;width:617px;height:0.9px;background:#e9eaf4;"></div>
<div class="a" style="left:135px;top:414.50px;width:10px;height:10px;border:1.1px solid #8c8c8c;border-radius:1.4px;background:#fff"></div>
<svg class="a" style="left:159.2px;top:409.40000000000003px;" width="19" height="20" viewBox="0 0 19 20">
<path d="M4 0.4 H14.2 L18.6 4.8 V18.6 Q18.6 19.6 17.6 19.6 H5 Q4 19.6 4 18.6 Z" fill="#f1f1f1" stroke="#cfcfcf" stroke-width="0.7"/>
<path d="M14.2 0.4 V4.8 H18.6" fill="#fff" stroke="#cfcfcf" stroke-width="0.7"/>
<rect x="0.7" y="4.7" width="15.6" height="6.4" rx="1.3" fill="#2b3ae2"/>
<text x="8.5" y="10" font-family="Liberation Sans, sans-serif" font-size="5.6" font-weight="700" fill="#fff" text-anchor="middle" textLength="11.4" lengthAdjust="spacingAndGlyphs">DOC</text>
</svg>
<span class="t" style="left:228.4px;top:412.85px;font-size:9.75px;color:#2a2a2a;letter-spacing:-0.174px;transform:scaleX(0.9784);transform-origin:0 50%;">Land Lease Agreement.doc</span>
<span class="t" style="left:420px;top:412.85px;font-size:9.75px;color:#2a2a2a;letter-spacing:-0.15px;">1</span>
<span class="t" style="left:468px;top:412.85px;font-size:9.75px;color:#2a2a2a;letter-spacing:-0.15px;">129</span>
<span class="t" style="left:557.4px;top:412.85px;font-size:9.75px;color:#2a2a2a;letter-spacing:-0.127px;">12/8/20...</span>
<span class="t" style="left:624.4px;top:412.85px;font-size:9.75px;color:#2a2a2a;letter-spacing:-0.171px;transform:scaleX(0.9272);transform-origin:0 50%;">8.5 KB</span>
<div class="a" style="left:687.5px;top:412.85px;width:32.8px;height:15px;overflow:hidden">
<span class="t" style="left:0px;top:0.00px;font-size:9.75px;color:#2a2a2a;letter-spacing:-0.173px;transform:scaleX(0.9070);transform-origin:0 50%;">Sales Agreement</span>
</div>
<div class="a" style="left:728.05px;top:415.75px;width:2.4px;height:2.4px;border-radius:50%;background:#111"></div>
<div class="a" style="left:728.05px;top:419.55px;width:2.4px;height:2.4px;border-radius:50%;background:#111"></div>
<div class="a" style="left:728.05px;top:423.35px;width:2.4px;height:2.4px;border-radius:50%;background:#111"></div>
<div class="a" style="left:127px;top:438.09999999999997px;width:617px;height:0.9px;background:#e9eaf4;"></div>
<div class="a" style="left:135px;top:452.80px;width:10px;height:10px;border:1.1px solid #8c8c8c;border-radius:1.4px;background:#fff"></div>
<svg class="a" style="left:159.2px;top:447.7px;" width="19" height="20" viewBox="0 0 19 20">
<path d="M4 0.4 H14.2 L18.6 4.8 V18.6 Q18.6 19.6 17.6 19.6 H5 Q4 19.6 4 18.6 Z" fill="#f1f1f1" stroke="#cfcfcf" stroke-width="0.7"/>
<path d="M14.2 0.4 V4.8 H18.6" fill="#fff" stroke="#cfcfcf" stroke-width="0.7"/>
<rect x="0.7" y="4.7" width="15.6" height="6.4" rx="1.3" fill="#2b3ae2"/>
<text x="8.5" y="10" font-family="Liberation Sans, sans-serif" font-size="5.6" font-weight="700" fill="#fff" text-anchor="middle" textLength="11.4" lengthAdjust="spacingAndGlyphs">DOC</text>
</svg>
<span class="t" style="left:228.4px;top:451.15px;font-size:9.75px;color:#2a2a2a;letter-spacing:-0.172px;transform:scaleX(0.9782);transform-origin:0 50%;">Witness_Statement.docx</span>
<span class="t" style="left:420px;top:451.15px;font-size:9.75px;color:#2a2a2a;letter-spacing:-0.15px;">12</span>
<span class="t" style="left:468px;top:451.15px;font-size:9.75px;color:#2a2a2a;letter-spacing:-0.15px;">81</span>
<span class="t" style="left:557.4px;top:451.15px;font-size:9.75px;color:#2a2a2a;letter-spacing:-0.127px;">12/2/20...</span>
<span class="t" style="left:624.4px;top:451.15px;font-size:9.75px;color:#2a2a2a;letter-spacing:-0.176px;transform:scaleX(0.9504);transform-origin:0 50%;">397.2 KB</span>
<div class="a" style="left:687.5px;top:451.15px;width:32.8px;height:15px;overflow:hidden">
<span class="t" style="left:0px;top:0.00px;font-size:9.75px;color:#2a2a2a;letter-spacing:-0.109px;">Deposition</span>
</div>
<div class="a" style="left:728.05px;top:454.05px;width:2.4px;height:2.4px;border-radius:50%;background:#111"></div>
<div class="a" style="left:728.05px;top:457.85px;width:2.4px;height:2.4px;border-radius:50%;background:#111"></div>
<div class="a" style="left:728.05px;top:461.65px;width:2.4px;height:2.4px;border-radius:50%;background:#111"></div>
<div class="a" style="left:127px;top:476.4px;width:617px;height:0.9px;background:#e9eaf4;"></div>
<div class="a" style="left:135px;top:491.10px;width:10px;height:10px;border:1.1px solid #8c8c8c;border-radius:1.4px;background:#fff"></div>
<svg class="a" style="left:159.2px;top:485.99999999999994px;" width="19" height="20" viewBox="0 0 19 20">
<path d="M4 0.4 H14.2 L18.6 4.8 V18.6 Q18.6 19.6 17.6 19.6 H5 Q4 19.6 4 18.6 Z" fill="#f1f1f1" stroke="#cfcfcf" stroke-width="0.7"/>
<path d="M14.2 0.4 V4.8 H18.6" fill="#fff" stroke="#cfcfcf" stroke-width="0.7"/>
<rect x="0.7" y="4.7" width="15.6" height="6.4" rx="1.3" fill="#c9302c"/>
<text x="8.5" y="10" font-family="Liberation Sans, sans-serif" font-size="5.6" font-weight="700" fill="#fff" text-anchor="middle" textLength="11.4" lengthAdjust="spacingAndGlyphs">PDF</text>
</svg>
<span class="t" style="left:228.4px;top:489.45px;font-size:9.75px;color:#2a2a2a;letter-spacing:-0.142px;">Personal Property Demand Letter.pdf</span>
<span class="t" style="left:420px;top:489.45px;font-size:9.75px;color:#2a2a2a;letter-spacing:-0.15px;">2</span>
<span class="t" style="left:468px;top:489.45px;font-size:9.75px;color:#2a2a2a;letter-spacing:-0.15px;">15</span>
<span class="t" style="left:557.4px;top:489.45px;font-size:9.75px;color:#2a2a2a;letter-spacing:-0.127px;">9/12/20...</span>
<span class="t" style="left:624.4px;top:489.45px;font-size:9.75px;color:#2a2a2a;letter-spacing:-0.171px;transform:scaleX(0.9272);transform-origin:0 50%;">2.2 KB</span>
<div class="a" style="left:687.5px;top:489.45px;width:32.8px;height:15px;overflow:hidden">
<span class="t" style="left:0px;top:0.00px;font-size:9.75px;color:#2a2a2a;letter-spacing:-0.059px;">Exploring_iManage</span>
</div>
<div class="a" style="left:728.05px;top:492.35px;width:2.4px;height:2.4px;border-radius:50%;background:#111"></div>
<div class="a" style="left:728.05px;top:496.15px;width:2.4px;height:2.4px;border-radius:50%;background:#111"></div>
<div class="a" style="left:728.05px;top:499.95px;width:2.4px;height:2.4px;border-radius:50%;background:#111"></div>
<div class="a" style="left:743.3px;top:209px;width:13.5px;height:301px;background:#f1f1f1;"></div>
<div class="a" style="left:743.3px;top:223.2px;width:13.5px;height:144px;background:#cacaca;"></div>
<svg class="a" style="left:746.4px;top:213.2px;" width="7.4" height="4.4" viewBox="0 0 7.4 4.4"><path d="M0.5 4 L3.7 0.7 L6.9 4" fill="none" stroke="#2a2a2a" stroke-width="1.5"/></svg>
<svg class="a" style="left:746.4px;top:501px;" width="7.4" height="4.4" viewBox="0 0 7.4 4.4"><path d="M0.5 0.4 L3.7 3.7 L6.9 0.4" fill="none" stroke="#2a2a2a" stroke-width="1.5"/></svg>
<div class="a" style="left:127px;top:510px;width:630px;height:12px;background:#fff;"></div>
<div class="a" style="left:127px;top:510px;width:593.4px;height:12px;background:#f1f1f1;"></div>
<div class="a" style="left:141px;top:510px;width:413px;height:12px;background:#c8c8c8;"></div>
<svg class="a" style="left:131px;top:512.4px;" width="4.6" height="7.4" viewBox="0 0 4.6 7.4"><path d="M4.1 0.5 L0.8 3.7 L4.1 6.9" fill="none" stroke="#2a2a2a" stroke-width="1.5"/></svg>
<svg class="a" style="left:711.8px;top:512.4px;" width="4.6" height="7.4" viewBox="0 0 4.6 7.4"><path d="M0.5 0.5 L3.8 3.7 L0.5 6.9" fill="none" stroke="#2a2a2a" stroke-width="1.5"/></svg>
<div id="highlight" class="a" style="left:127.4px;top:248.8px;width:622.4px;height:41.1px;border:3.3px solid #7810f2;border-radius:1px"></div>
<aside id="props" class="a" style="left:757px;top:130px;width:218px;height:392px;background:#fff;border-left:1px solid #e3e3e3;border-top:1px solid #e4e4e4"></aside>
<div class="a" style="left:757px;top:156.8px;width:218px;height:0.9px;background:#dcdcdc;"></div>
<div class="a" style="left:757.4px;top:155.7px;width:63.6px;height:1.8px;background:#2b3ae2;"></div>
<span class="t" style="left:767.4px;top:136.00px;font-size:9.6px;font-weight:700;color:#1e1e1e;letter-spacing:-0.166px;transform:scaleX(0.9824);transform-origin:0 50%;">Properties</span>
<span class="t" style="left:831px;top:136.00px;font-size:9.6px;letter-spacing:-0.107px;">Security</span>
<span class="t" style="left:883.4px;top:136.00px;font-size:9.6px;letter-spacing:-0.100px;">Versions</span>
<span class="t" style="left:938.4px;top:136.00px;font-size:9.6px;letter-spacing:-0.171px;transform:scaleX(0.9778);transform-origin:0 50%;">Preview</span>
<div class="a" style="left:966px;top:158px;width:9px;height:364px;background:#f1f1f1;"></div>
<div class="a" style="left:966px;top:171.8px;width:9px;height:101px;background:#cacaca;"></div>
<svg class="a" style="left:968.8px;top:162.6px;" width="7.4" height="4.4" viewBox="0 0 7.4 4.4"><path d="M0.5 4 L3.7 0.7 L6.9 4" fill="none" stroke="#2a2a2a" stroke-width="1.5"/></svg>
<svg class="a" style="left:968.8px;top:514.8px;" width="7.4" height="4.4" viewBox="0 0 7.4 4.4"><path d="M0.5 0.4 L3.7 3.7 L6.9 0.4" fill="none" stroke="#2a2a2a" stroke-width="1.5"/></svg>
<svg class="a" style="left:767.2px;top:167.8px;" width="15.2" height="16" viewBox="0 0 19 20">
<path d="M4.4 0.4 H14.2 L18.6 4.8 V18.6 Q18.6 19.6 17.6 19.6 H5.4 Q4.4 19.6 4.4 18.6 Z" fill="#f1f1f1" stroke="#cfcfcf" stroke-width="0.8"/>
<path d="M14.2 0.4 V4.8 H18.6" fill="#fff" stroke="#cfcfcf" stroke-width="0.8"/>
<rect x="0.2" y="4.8" width="16.2" height="6.4" rx="1.2" fill="#2b3ae2"/>
<text x="8.3" y="10" font-family="Liberation Sans, sans-serif" font-size="5.6" font-weight="700" fill="#fff" text-anchor="middle" textLength="11.6" lengthAdjust="spacingAndGlyphs">DOC</text>
</svg>
<span class="t" style="left:791.4px;top:169.90px;font-size:11.4px;letter-spacing:-0.074px;">witness_testimony</span>
<span class="t" style="left:771.6px;top:191.20px;font-size:8.5px;color:#444;letter-spacing:-0.157px;transform:scaleX(0.9689);transform-origin:0 50%;">v3</span>
<span class="t" style="left:793px;top:191.20px;font-size:8.5px;color:#444;letter-spacing:-0.130px;">#134</span>
<span class="t" style="left:824.4px;top:191.20px;font-size:8.5px;color:#444;letter-spacing:-0.144px;transform:scaleX(0.9327);transform-origin:0 50%;">Dec 8, 2025, 8:18 PM</span>
<span class="t" style="left:911.6px;top:191.20px;font-size:8.5px;color:#444;letter-spacing:-0.151px;transform:scaleX(0.9318);transform-origin:0 50%;">46.1 KB</span>
<div class="a" style="left:786.2px;top:193.4px;width:1px;height:9px;background:#b8b8b8;"></div>
<div class="a" style="left:817.4px;top:193.4px;width:1px;height:9px;background:#b8b8b8;"></div>
<div class="a" style="left:904.8px;top:193.4px;width:1px;height:9px;background:#b8b8b8;"></div>
<div class="a" style="left:945.8px;top:193.4px;width:1px;height:9px;background:#b8b8b8;"></div>
<span class="t" style="left:771.6px;top:205.20px;font-size:8.5px;color:#444;letter-spacing:-0.188px;transform:scaleX(0.8915);transform-origin:0 50%;">UMAIR.NASAR</span>
<span class="t" style="left:825.6px;top:205.20px;font-size:8.5px;color:#444;">|</span>
<span class="t" style="left:830.6px;top:205.20px;font-size:8.5px;color:#444;letter-spacing:-0.111px;">umair.nasar</span>
<span class="t" style="left:765.4px;top:230.40px;font-size:8.3px;font-weight:700;color:#262626;letter-spacing:-0.140px;transform:scaleX(0.9623);transform-origin:0 50%;">Edit Date</span>
<span class="t" style="left:769px;top:251.60px;font-size:9.8px;letter-spacing:-0.181px;transform:scaleX(0.9620);transform-origin:0 50%;">Mon Dec 08 2025 20:18:19 GMT+0500</span>
<span class="t" style="left:769px;top:265.60px;font-size:9.8px;letter-spacing:-0.161px;transform:scaleX(0.9749);transform-origin:0 50%;">(Pakistan Standard Time)</span>
<span class="t" style="left:765.4px;top:291.40px;font-size:8.3px;font-weight:700;color:#262626;letter-spacing:-0.159px;transform:scaleX(0.9676);transform-origin:0 50%;">Author</span>
<span class="t" style="left:793.4px;top:289.60px;font-size:6.6px;color:#d9301f;">*</span>
<div class="a" style="left:770.6px;top:312.6px;width:15.8px;height:15.8px;border:1px solid #dadada;border-radius:50%;background:#fff"></div>
<span class="t" style="left:774.6px;top:313.70px;font-size:6.4px;color:#666;letter-spacing:-0.014px;">FA</span>
<span class="t" style="left:790.6px;top:314.00px;font-size:9.6px;color:#2a2a2a;letter-spacing:-0.208px;transform:scaleX(0.9425);transform-origin:0 50%;">FATIMA.AHMED</span>
<span class="t" style="left:859.2px;top:314.00px;font-size:9.6px;color:#2a2a2a;">|</span>
<span class="t" style="left:865px;top:314.00px;font-size:9.6px;color:#2a2a2a;letter-spacing:-0.088px;">Fatima Ahmed</span>
<span class="t" style="left:765.4px;top:349.40px;font-size:8.3px;font-weight:700;color:#262626;letter-spacing:-0.188px;transform:scaleX(0.9668);transform-origin:0 50%;">Comments</span>
<span class="t" style="left:772px;top:370.60px;font-size:9.6px;color:#555;letter-spacing:-0.135px;">Checked in from Dynamics</span>
<div class="a" style="left:944.4px;top:366.6px;width:13.6px;height:34px;background:#f1f1f1;"></div>
<svg class="a" style="left:947.6px;top:371.4px;" width="7" height="4.2" viewBox="0 0 7 4.2"><path d="M0.4 3.8 L3.5 0.7 L6.6 3.8" fill="none" stroke="#2a2a2a" stroke-width="1.5"/></svg>
<svg class="a" style="left:947.6px;top:391.6px;" width="7" height="4.2" viewBox="0 0 7 4.2"><path d="M0.4 0.4 L3.5 3.5 L6.6 0.4" fill="none" stroke="#2a2a2a" stroke-width="1.5"/></svg>
<span class="t" style="left:765.4px;top:418.60px;font-size:8.3px;font-weight:700;color:#262626;letter-spacing:-0.164px;transform:scaleX(0.9506);transform-origin:0 50%;">Type</span>
<span class="t" style="left:784.8px;top:416.20px;font-size:6.6px;color:#d9301f;">*</span>
<span class="t" style="left:772.6px;top:440.60px;font-size:9.6px;color:#2a2a2a;letter-spacing:-0.257px;transform:scaleX(0.9128);transform-origin:0 50%;">WORDX</span>
<span class="t" style="left:808.4px;top:440.60px;font-size:9.6px;color:#2a2a2a;">|</span>
<span class="t" style="left:814.4px;top:440.60px;font-size:9.6px;color:#2a2a2a;letter-spacing:-0.212px;transform:scaleX(0.9526);transform-origin:0 50%;">WORD 2007</span>
<span class="t" style="left:765.4px;top:475.60px;font-size:8.3px;font-weight:700;color:#262626;letter-spacing:-0.155px;transform:scaleX(0.8799);transform-origin:0 50%;">Class</span>
<span class="t" style="left:786.8px;top:473.40px;font-size:6.6px;color:#d9301f;">*</span>
<span class="t" style="left:772.6px;top:498.60px;font-size:9.6px;color:#2a2a2a;letter-spacing:-0.249px;transform:scaleX(0.9329);transform-origin:0 50%;">DOC</span>
<span class="t" style="left:795.4px;top:498.60px;font-size:9.6px;color:#2a2a2a;">|</span>
<span class="t" style="left:801.4px;top:498.60px;font-size:9.6px;color:#2a2a2a;letter-spacing:0.033px;">Document</span>
</div>
</body>
</html>
